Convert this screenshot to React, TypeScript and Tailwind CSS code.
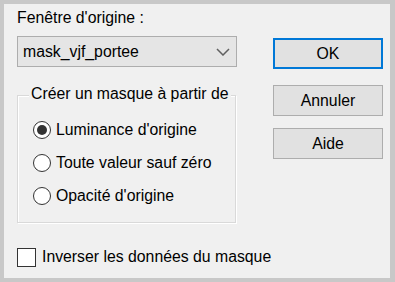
import React from "react";

function Radio({ checked, label }: { checked?: boolean; label: string }) {
  return (
    <div className="flex items-center h-[20px]">
      <div className="w-[18px] h-[18px] rounded-full border border-[#333333] bg-white flex items-center justify-center">
        {checked && <div className="w-[10px] h-[10px] rounded-full bg-[#333333]" />}
      </div>
      <span className="ml-[5px]">{label}</span>
    </div>
  );
}

function Btn({ label, primary }: { label: string; primary?: boolean }) {
  return (
    <div
      className={
        "w-[110px] h-[31px] flex items-center justify-center bg-[#e1e1e1] " +
        (primary ? "border-2 border-[#0078d7]" : "border border-[#adadad]")
      }
    >
      {label}
    </div>
  );
}

export default function App() {
  return (
    <div
      className="w-[395px] h-[282px] bg-[#c8c8c8] pl-[4px] pt-[4px] pr-[5px] pb-[4px] flex text-black text-[15.8px] leading-[20px]"
      style={{ fontFamily: '"Liberation Sans", Arial, sans-serif' }}
    >
      <div className="flex-1 bg-[#f0f0f0] pl-[13px] pt-[4px] flex flex-col">
        <div className="flex">
          <div className="w-[220px] flex flex-col">
            <div className="h-[20px]">Fenêtre d'origine :</div>
            <div className="mt-[8px] h-[31px] border border-[#adadad] bg-[#e5e5e5] flex items-center pl-[5px] pr-[6px]">
              <span className="flex-1">mask_vjf_portee</span>
              <svg width="14" height="8" viewBox="0 0 14 8">
                <path d="M1 1 L7 7 L13 1" fill="none" stroke="#606060" strokeWidth="1.5" />
              </svg>
            </div>
            <div className="relative mt-[28px] w-[219px] h-[128px] border border-[#d9d9d9] shadow-[inset_1px_1px_0_#ffffff,1px_1px_0_#ffffff]">
              <span className="absolute left-[11px] -top-[12px] bg-[#f0f0f0] px-[2px]">
                Créer un masque à partir de
              </span>
              <div className="flex flex-col gap-[13px] pl-[15px] pt-[24px]">
                <Radio checked label="Luminance d'origine" />
                <Radio label="Toute valeur sauf zéro" />
                <Radio label="Opacité d'origine" />
              </div>
            </div>
          </div>
          <div className="ml-[36px] pt-[30px] flex flex-col">
            <Btn primary label="OK" />
            <div className="mt-[16px]">
              <Btn label="Annuler" />
            </div>
            <div className="mt-[12px]">
              <Btn label="Aide" />
            </div>
          </div>
        </div>
        <div className="mt-[24px] flex items-center">
          <div className="w-[19px] h-[19px] border border-[#333333] bg-white" />
          <span className="ml-[6px]">Inverser les données du masque</span>
        </div>
      </div>
    </div>
  );
}
